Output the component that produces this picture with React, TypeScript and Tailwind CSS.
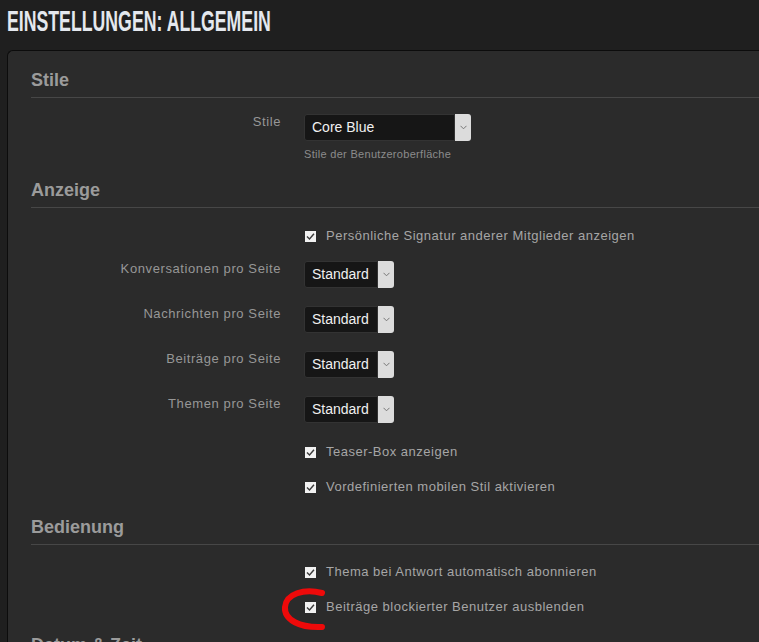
import React from "react";

const font = "font-['Liberation_Sans',Arial,sans-serif]";

function Check() {
  return (
    <span className="inline-flex h-[11px] w-[11px] items-center justify-center bg-[#f2f2f2]">
      <svg width="9" height="9" viewBox="0 0 9 9">
        <path d="M1 4.6 L3.5 7 L8 1.8" fill="none" stroke="#3a3a3a" strokeWidth="1.4" />
      </svg>
    </span>
  );
}

function Select({ value, width }: { value: string; width: string }) {
  return (
    <div className={`flex h-[27px] ${width}`}>
      <div className="flex flex-1 items-center rounded-l-[3px] border border-[#333] bg-[#161616] pl-[7px] text-[14px] text-[#f0f0f0]">
        {value}
      </div>
      <div className="flex w-[16px] items-center justify-center rounded-r-[3px] bg-[#dcdcdc]">
        <svg width="7" height="5" viewBox="0 0 7 5">
          <path d="M0.5 0.8 L3.5 3.8 L6.5 0.8" fill="none" stroke="#777" strokeWidth="1" />
        </svg>
      </div>
    </div>
  );
}

function Heading({ children, pt }: { children: React.ReactNode; pt: string }) {
  return (
    <div className={`${pt} border-b border-[#474747] pb-[5px]`}>
      <h2 className="text-[18px] font-bold leading-[24px] text-[#9b9b9b]">{children}</h2>
    </div>
  );
}

function CheckRow({ label, mt }: { label: string; mt: string }) {
  return (
    <div className={`${mt} flex h-[18px] items-center pl-[274px]`}>
      <Check />
      <span className="ml-[10px] text-[13px] tracking-[0.5px] text-[#a6a6a6]">{label}</span>
    </div>
  );
}

function SelectRow({ label, value, mt, width }: { label: string; value: string; mt: string; width: string }) {
  return (
    <div className={`${mt} flex`}>
      <div className="w-[250px] text-right text-[13px] leading-[16px] tracking-[0.6px] text-[#979797]">{label}</div>
      <div className="ml-[23px]">
        <Select value={value} width={width} />
      </div>
    </div>
  );
}

export default function App() {
  return (
    <div className={`${font} relative h-[642px] w-[759px] overflow-hidden bg-[#1f1f1f]`}>
      <div className="h-[50px] pl-[7px] pt-[3px]">
        <h1 className="origin-left scale-x-[0.59] whitespace-nowrap text-[30px] font-bold leading-[36px] text-[#e4e8ee]">
          EINSTELLUNGEN: ALLGEMEIN
        </h1>
      </div>
      <div className="ml-[7px] h-[600px] rounded-tl-[6px] border-l border-t border-[#0c0c0c] bg-[#2b2b2b] pl-[23px]">
        <Heading pt="pt-[17px]">Stile</Heading>
        <SelectRow label="Stile" value="Core Blue" mt="mt-[16px]" width="w-[167px]" />
        <div className="ml-[273px] mt-[6px] text-[11px] leading-[14px] tracking-[0.3px] text-[#8b8b8b]">
          Stile der Benutzeroberfläche
        </div>

        <Heading pt="pt-[17px]">Anzeige</Heading>
        <CheckRow label="Persönliche Signatur anderer Mitglieder anzeigen" mt="mt-[19px]" />
        <SelectRow label="Konversationen pro Seite" value="Standard" mt="mt-[16px]" width="w-[90px]" />
        <SelectRow label="Nachrichten pro Seite" value="Standard" mt="mt-[18px]" width="w-[90px]" />
        <SelectRow label="Beiträge pro Seite" value="Standard" mt="mt-[18px]" width="w-[90px]" />
        <SelectRow label="Themen pro Seite" value="Standard" mt="mt-[18px]" width="w-[90px]" />
        <CheckRow label="Teaser-Box anzeigen" mt="mt-[20px]" />
        <CheckRow label="Vordefinierten mobilen Stil aktivieren" mt="mt-[17px]" />

        <Heading pt="pt-[19px]">Bedienung</Heading>
        <CheckRow label="Thema bei Antwort automatisch abonnieren" mt="mt-[18px]" />
        <CheckRow label="Beiträge blockierter Benutzer ausblenden" mt="mt-[17px]" />

        <Heading pt="pt-[17px]">Datum &amp; Zeit</Heading>
      </div>
      <svg className="pointer-events-none absolute left-0 top-0" width="759" height="642">
        <path
          d="M322 593 C304 588, 286 594, 285 607 C284 620, 300 628, 322 627"
          fill="none"
          stroke="#ee0a0a"
          strokeWidth="6"
          strokeLinecap="round"
        />
      </svg>
    </div>
  );
}
